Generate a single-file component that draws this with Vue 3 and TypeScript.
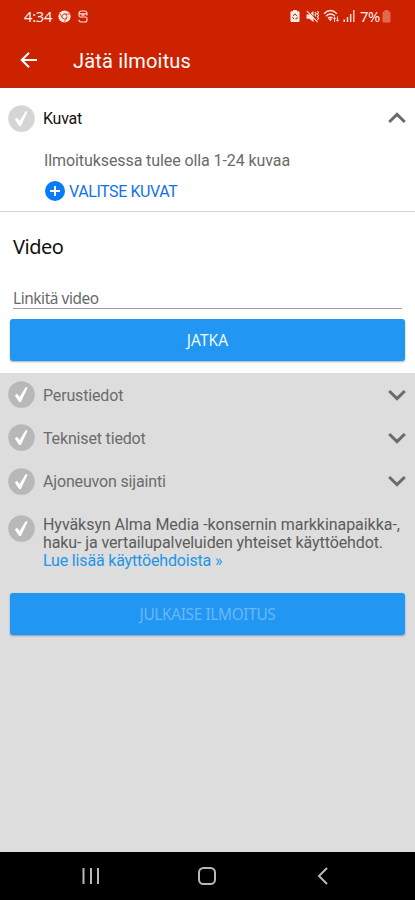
<script setup lang="ts">
const sections: { title: string }[] = [
  { title: 'Perustiedot' },
  { title: 'Tekniset tiedot' },
  { title: 'Ajoneuvon sijainti' },
]
</script>

<template>
  <div class="screen">
    <header class="top">
      <div class="status">
        <span class="time">4:34</span>
        <svg class="chrome" viewBox="0 0 13 13">
          <circle cx="6.5" cy="6.5" r="6.1" fill="#ffe9e4" />
          <circle cx="6.5" cy="6.5" r="2.5" fill="none" stroke="#cc2200" stroke-width=".8" />
          <path d="M6.5 4h5.2M4.3 7.800 1.700 3.300M8.700 7.800l-2.500 4.400" stroke="#cc2200" stroke-width=".7" />
        </svg>
        <svg class="s-app" viewBox="0 0 10 13" fill="none" stroke="#ffe0da" stroke-width="1.1">
          <path d="M9 3.700Q8.800 1 6.500 1h-3Q1 1 1 3.800V5.200Q1 7 2.500 7H7.500Q9 7 9 8.500V10Q9 12 7 12H3Q1 12 1 9.800M1.200 3.900H9V5.500M3.500 5.300h3" />
        </svg>
        <span class="grow"></span>
        <svg class="recycle" viewBox="0 0 10 12">
          <path d="M3 0h4v1.300h1.500Q9.500 1.300 9.500 2.300V11Q9.500 12 8.500 12h-7Q.5 12 .5 11V2.300Q.5 1.300 1.500 1.300H3z" fill="#fff0ec" />
          <path d="M3 6.200 5 3.800l2 2.400M7.400 7 6.500 9H5.300M3.800 9 2.700 7.200" fill="none" stroke="#cc2200" stroke-width="1" />
        </svg>
        <svg class="mute" viewBox="0 0 13 13">
          <path d="M.5 4.500h2.700L7.500 1v11L3.200 8.700H.5z" fill="#ffe0da" />
          <path d="m1.500.5 10.500 11" stroke="#cc2200" stroke-width="1" />
          <path d="m.8.900 10.800 11.200M9 2l1.200 1.500L9 5l1.200 1.500M11.500 1l1 1.500-1 1.500 1 1.500-1 1.500 1 1.500-1 1.500" fill="none" stroke="#ffe0da" stroke-width="1.200" />
        </svg>
        <svg class="wifi" viewBox="0 0 17 14" fill="none" stroke="#ffe0da" stroke-width="1.400">
          <path d="M1 4.700Q7.500-1.500 14 4.700M3 7.200Q7.500 3 12 7.200M5 9.400Q7.500 7.200 9.500 9" />
          <path d="m5.700 10.300 1.800-1.200 1.500 1.200-1.500 2z" fill="#ffe0da" stroke="none" />
          <path d="M11.500 13V8.300M10 9.800l1.500-1.500L13 9.800M14.500 7.500v4.700M13.200 10.800l1.300 1.400 1.300-1.400" stroke-width="1" />
        </svg>
        <svg class="signal" viewBox="0 0 12 12" fill="#ffe0da">
          <path d="M.5 9.500H2V12H.5zM3.700 7h1.500v5H3.700zM6.900 4h1.500v8H6.900z" />
          <path d="M10 0h1.500v12H10z" opacity=".85" />
        </svg>
        <span class="percent">7%</span>
        <svg class="battery" viewBox="0 0 9 13">
          <path d="M2.500 0h4v1.400h1Q8.500 1.400 8.500 2.400V11.500Q8.500 12.500 7.500 12.500h-6Q.5 12.500.5 11.500V2.400Q.5 1.400 1.500 1.400h1z" fill="#e0694f" />
        </svg>
      </div>
      <div class="bar">
        <svg class="back" viewBox="0 0 18 18" fill="none" stroke="#fff" stroke-width="2">
          <path d="M17 9H2M9 1.700 1.700 9 9 16.300" />
        </svg>
        <h1>Jätä ilmoitus</h1>
      </div>
    </header>

    <section class="open">
      <div class="row first">
        <svg class="check pale" viewBox="0 0 27 27">
          <circle cx="13.500" cy="13.500" r="13.300" />
          <path d="M6.800 14.500 9 12.800l2.600 3.300L17.800 6l1.800.8-6.700 14.100h-1.800z" />
        </svg>
        <span class="label">Kuvat</span>
        <svg class="chevron" viewBox="0 0 18 12"><path d="M1.200 10 9 2.400l7.800 7.600" /></svg>
      </div>
      <p class="hint">Ilmoituksessa tulee olla 1-24 kuvaa</p>
      <div class="pick">
        <svg viewBox="0 0 20 20">
          <circle cx="10" cy="10" r="10" fill="#087bf8" />
          <path d="M10 5v10M5 10h10" stroke="#fff" stroke-width="2" />
        </svg>
        <span>VALITSE KUVAT</span>
      </div>
    </section>

    <section class="video">
      <h2>Video</h2>
      <div class="field"><span>Linkitä video</span></div>
      <button class="btn next"><span>JATKA</span></button>
    </section>

    <main class="rest">
      <div v-for="s in sections" :key="s.title" class="row">
        <svg class="check" viewBox="0 0 27 27">
          <circle cx="13.500" cy="13.500" r="13.300" />
          <path d="M6.800 14.500 9 12.800l2.600 3.300L17.800 6l1.800.8-6.700 14.100h-1.800z" />
        </svg>
        <span class="label">{{ s.title }}</span>
        <svg class="chevron" viewBox="0 0 18 12"><path d="M1.200 2 9 9.600 16.800 2" /></svg>
      </div>
      <div class="terms">
        <svg class="check" viewBox="0 0 27 27">
          <circle cx="13.500" cy="13.500" r="13.300" />
          <path d="M6.800 14.500 9 12.800l2.600 3.300L17.800 6l1.800.8-6.700 14.100h-1.800z" />
        </svg>
        <div class="copy">
          <div class="l1">Hyväksyn Alma Media -konsernin markkinapaikka-,</div>
          <div class="l2">haku- ja vertailupalveluiden yhteiset käyttöehdot.</div>
          <div class="l3">Lue lisää käyttöehdoista »</div>
        </div>
      </div>
      <button class="btn publish"><span>JULKAISE ILMOITUS</span></button>
    </main>

    <nav class="nav">
      <svg viewBox="0 0 18 18"><path d="M1.500 1v16M9 1v16M16 1v16" /></svg>
      <svg viewBox="0 0 18 18"><rect x="1" y="1" width="16" height="16" rx="4.500" /></svg>
      <svg viewBox="0 0 18 18"><path d="M13 1 5 9l8 8" /></svg>
    </nav>
  </div>
</template>

<style>
body { background: #ddd; }
</style>

<style scoped>
.screen {
  width: 415px;
  height: 900px;
  display: flex;
  flex-direction: column;
  overflow: hidden;
  background: #ddd;
  font-family: Roboto, sans-serif;
  font-size: 16px;
}
svg { display: block; flex: none; }
span, h1, h2, p, .copy div { white-space: nowrap; }
.top { height: 88px; background: #cc2200; color: #fff; box-sizing: border-box; border-bottom: 1px solid #b92716; flex: none; }
.status { height: 32px; display: flex; align-items: center; padding: 0 24px; color: #ffece8; }
.time { width: 29px; font: 400 14.800px/30px "Noto Sans", sans-serif; letter-spacing: -.3px; }
.chrome { width: 13px; height: 13px; margin-left: 5px; }
.s-app { width: 10px; height: 13px; margin-left: 7px; }
.grow { flex: 1; }
.recycle { width: 10px; height: 12px; margin-right: 6px; }
.mute { width: 13px; height: 13px; margin-right: 4px; }
.wifi { width: 17px; height: 14px; margin-right: 3px; }
.signal { width: 12px; height: 12px; margin-right: 5px; }
.percent { width: 22px; font: 400 14.800px/30px "Noto Sans", sans-serif; letter-spacing: -.5px; }
.battery { width: 9px; height: 13px; }
.time, .percent { margin-top: -1px; }
.bar { height: 56px; display: flex; align-items: center; padding-left: 20px; }
.back { width: 18px; height: 18px; }
h1 { margin: 2px 0 0 35px; font-size: 20px; font-weight: 400; letter-spacing: .18px; }
.open { height: 123px; flex: none; background: #fff; border-bottom: 1px solid #d4d4d4; }
.row { height: 43.250px; display: flex; align-items: center; padding: 0 9px 0 8px; }
.first { height: 60px; }
.check { width: 27px; height: 27px; }
.check circle { fill: #b8b8b8; }
.check path { fill: #fff; }
.pale circle { fill: #d5d5d5; }
.label { flex: 1; margin: 1px 0 0 8px; color: #6c6c6c; letter-spacing: -.16px; }
.first .label { color: #111; letter-spacing: -.25px; }
.chevron { width: 18px; height: 12px; }
.chevron path { fill: none; stroke: #6b6b6b; stroke-width: 3; }
.hint { margin: 2px 0 0 44px; line-height: 22px; color: #6a6a6a; letter-spacing: -.09px; }
.pick { display: flex; align-items: center; margin: 8px 0 0 45px; color: #1272ec; height: 22px; letter-spacing: -.42px; }
.pick svg { width: 20px; height: 20px; margin-right: 4px; }
.video { height: 161px; flex: none; background: #fff; overflow: hidden; font-family: "Noto Sans", sans-serif; }
h2 { margin: 21px 0 0 13px; font-size: 20px; line-height: 28px; font-weight: 400; color: #111; letter-spacing: -.5px; }
.field { margin: 27px 13px 0; height: 20px; line-height: 22px; font-size: 15.400px; color: #696969; letter-spacing: -.42px; border-bottom: 1px solid #9aa0a8; }
.btn { display: block; width: 395px; height: 42px; padding: 2px 0 0; box-sizing: border-box; border: 0; border-radius: 3px; background: #2196f3; font: 400 15.400px/40px "Noto Sans", sans-serif; box-shadow: 0 1px 2px rgba(0, 60, 110, .4); }
.next { margin: 10px 0 0 10px; color: #f2faff; letter-spacing: .1px; }
.rest { flex: 1; }
.terms { display: flex; padding: 12px 0 0 8px; }
.copy { margin: 1px 0 0 8px; color: #5c5c5c; line-height: 18px; }
.l1 { letter-spacing: -.05px; }
.l2 { letter-spacing: -.1px; }
.l3 { color: #2196e8; letter-spacing: -.17px; }
.publish { margin: 23.500px 0 0 10px; color: #6bb8f6; letter-spacing: -.35px; }
.nav { height: 48px; background: #000; flex: none; display: flex; justify-content: space-between; align-items: center; padding: 0 83px 0 82px; }
.nav svg { width: 18px; height: 18px; fill: none; stroke: #b8b8b8; stroke-width: 2; }
</style>
